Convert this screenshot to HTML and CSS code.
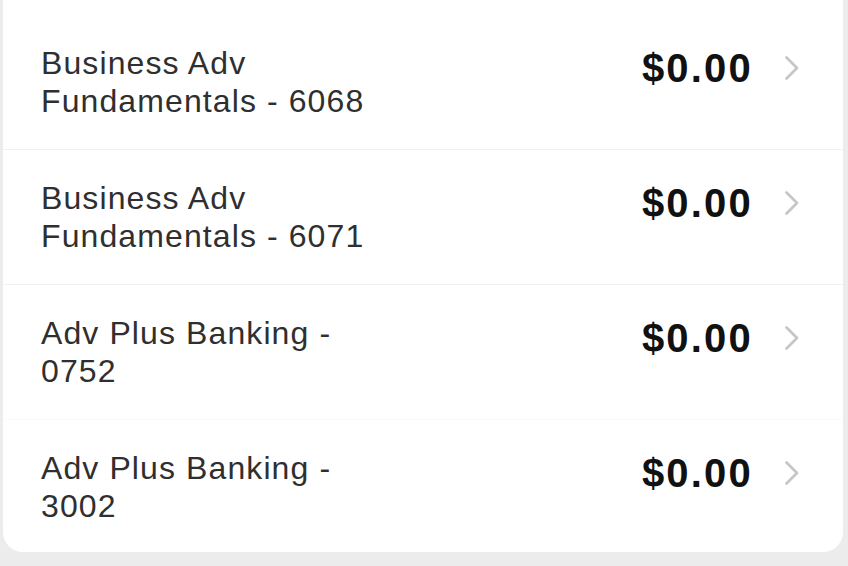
FILE: index.html
```html
<!DOCTYPE html>
<html>
<head>
<meta charset="utf-8">
<link rel="stylesheet" href="styles.css">
</head>
<body>
<div class="page">
  <div class="card">
    <div class="row">
      <div class="name">Business Adv Fundamentals - 6068</div>
      <div class="right"><span class="amount">$0.00</span><svg class="chev" width="16" height="26" viewBox="0 0 16 26"><path d="M2.5 2.5 L13 13 L2.5 23.5" fill="none" stroke="#c6c6c9" stroke-width="2.8" stroke-linecap="round" stroke-linejoin="round"/></svg></div>
    </div>
    <div class="row">
      <div class="name">Business Adv Fundamentals - 6071</div>
      <div class="right"><span class="amount">$0.00</span><svg class="chev" width="16" height="26" viewBox="0 0 16 26"><path d="M2.5 2.5 L13 13 L2.5 23.5" fill="none" stroke="#c6c6c9" stroke-width="2.8" stroke-linecap="round" stroke-linejoin="round"/></svg></div>
    </div>
    <div class="row faint">
      <div class="name">Adv Plus Banking - 0752</div>
      <div class="right"><span class="amount">$0.00</span><svg class="chev" width="16" height="26" viewBox="0 0 16 26"><path d="M2.5 2.5 L13 13 L2.5 23.5" fill="none" stroke="#c6c6c9" stroke-width="2.8" stroke-linecap="round" stroke-linejoin="round"/></svg></div>
    </div>
    <div class="row">
      <div class="name">Adv Plus Banking - 3002</div>
      <div class="right"><span class="amount">$0.00</span><svg class="chev" width="16" height="26" viewBox="0 0 16 26"><path d="M2.5 2.5 L13 13 L2.5 23.5" fill="none" stroke="#c6c6c9" stroke-width="2.8" stroke-linecap="round" stroke-linejoin="round"/></svg></div>
    </div>
  </div>
</div>
</body>
</html>
```
FILE: styles.css
```css
html, body {
  margin: 0;
  padding: 0;
  background: #ececec;
  height: 566px;
  overflow: hidden;
}
.page {
  padding: 0 5px 0 3px;
}
.card {
  background: #ffffff;
  border-radius: 20px;
  margin-top: -25px;
  padding-top: 40px;
}
.row {
  display: flex;
  justify-content: space-between;
  align-items: flex-start;
  padding: 29px 43px 29px 38px;
  border-bottom: 1px solid #f1f1f1;
}
.row.faint {
  border-bottom-color: #fafafa;
}
.row:last-child {
  border-bottom: none;
  padding-bottom: 27px;
}
.name {
  width: 340px;
  font-family: "Liberation Sans", Arial, sans-serif;
  font-size: 32px;
  line-height: 38px;
  letter-spacing: 1.1px;
  color: #2f2f2f;
}
.right {
  display: flex;
  align-items: center;
  height: 48px;
}
.amount {
  font-family: "Liberation Sans", Arial, sans-serif;
  font-weight: bold;
  font-size: 40px;
  line-height: 48px;
  letter-spacing: 2.2px;
  color: #111111;
}
.chev {
  margin-left: 31px;
  display: block;
}
```
